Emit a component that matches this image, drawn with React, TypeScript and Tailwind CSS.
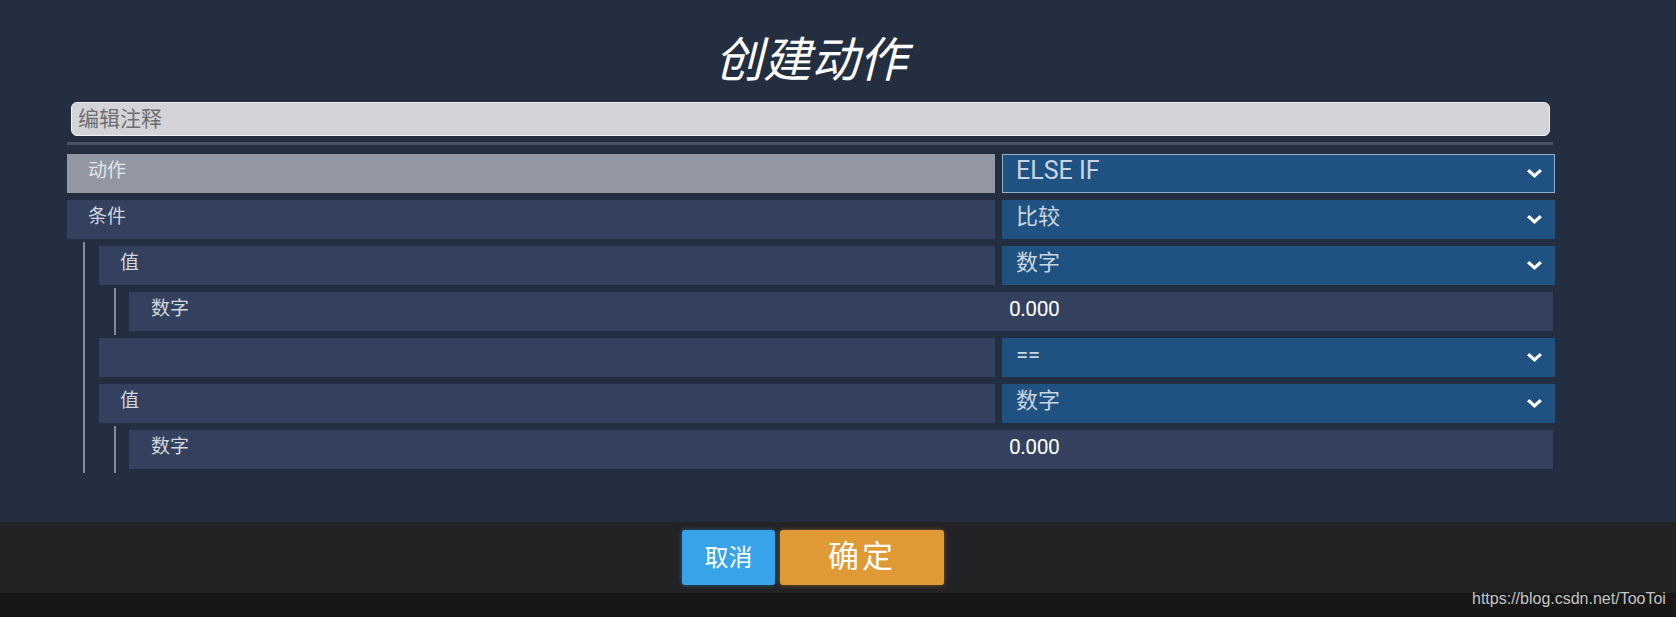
import React from 'react';

const Chevron: React.FC = () => (
  <svg width="15" height="9" viewBox="0 0 15 9" className="shrink-0">
    <path d="M0 2.3 L2.3 0 L7.5 4.7 L12.7 0 L15 2.3 L7.5 9 Z" fill="#ffffff" />
  </svg>
);

interface RowProps {
  label: string;
  value: string;
  active?: boolean;
  latin?: boolean;
}

const SelectRow: React.FC<RowProps> = ({ label, value, active, latin }) => (
  <div className="flex h-[39px] gap-[7px]">
    <div
      className={`flex flex-1 items-center pb-[6px] pl-[21px] text-[19px] leading-[24px] ${
        active ? 'bg-[#9397a1] text-[#e4e6ea]' : 'bg-[#33415f] text-[#d2d6dd]'
      }`}
    >
      {label}
    </div>
    <div
      className={`flex w-[553px] shrink-0 items-center justify-between bg-[#1f5280] ${
        active ? 'border border-[#8fb0cf] pl-[13px] pr-[12px]' : 'pl-[14px] pr-[13px]'
      }`}
    >
      <span className={`pb-[6px] leading-[28px] text-[#cbd6e4] ${latin ? 'text-[25px]' : 'text-[22px]'}`}>
        {value}
      </span>
      <Chevron />
    </div>
  </div>
);

const NumberRow: React.FC<{ label: string; value: string }> = ({ label, value }) => (
  <div className="mr-[2px] flex h-[39px] items-center bg-[#33415f] pb-[6px]">
    <span className="flex-1 pl-[22px] text-[19px] leading-[24px] text-[#d2d6dd]">{label}</span>
    <span className="w-[551px] shrink-0 pl-[7px] text-[21px] leading-[24px] tracking-[-0.5px] text-white">
      {value}
    </span>
  </div>
);

const Branch: React.FC<{ outer?: boolean; children: React.ReactNode }> = ({ outer, children }) => (
  <div className="flex">
    <div
      className={`-my-[4px] w-[2px] shrink-0 bg-[#858a94] ${outer ? 'ml-[16px] mr-[14px]' : 'ml-[15px] mr-[13px]'}`}
    />
    <div className="flex min-w-0 flex-1 flex-col gap-[7px]">{children}</div>
  </div>
);

export default function App() {
  return (
    <div className="relative flex h-[617px] w-full flex-col overflow-hidden font-['Roboto','Noto_Sans_CJK_SC',sans-serif]">
      <main className="h-[522px] shrink-0 bg-[#242e41] pl-[67px] pr-[121px]">
        <h1 className="pt-[37px] text-center text-[48px] font-normal italic leading-none text-white">
          创建动作
        </h1>

        <input
          className="mx-[4px] mt-[17px] block h-[34px] w-[calc(100%-9px)] rounded-[6px] border-[1.5px] border-[#eef0f3] bg-[#d3d4d8] px-[6px] text-[21px] text-[#333] outline-none placeholder:text-[#6d6e72]"
          placeholder="编辑注释"
        />

        <div className="mr-[2px] mt-[6px] h-[3px] bg-[#4b5363]" />

        <div className="mt-[9px] flex flex-col gap-[7px]">
          <SelectRow label="动作" value="ELSE IF" active latin />
          <SelectRow label="条件" value="比较" />
          <Branch outer>
            <SelectRow label="值" value="数字" />
            <Branch>
              <NumberRow label="数字" value="0.000" />
            </Branch>
            <SelectRow label="" value="==" />
            <SelectRow label="值" value="数字" />
            <Branch>
              <NumberRow label="数字" value="0.000" />
            </Branch>
          </Branch>
        </div>
      </main>

      <footer className="flex h-[71px] shrink-0 justify-center gap-[5px] bg-[#232225] pl-[71px] pr-[121px] pt-[8px]">
        <button className="h-[55px] w-[93px] rounded-[3px] bg-[#37a3e8] text-[24px] font-normal text-white shadow-[0_0_5px_rgba(55,163,232,0.45)]">
          取消
        </button>
        <button className="h-[55px] w-[164px] rounded-[3px] bg-[#e09a35] text-[31px] font-normal tracking-[3px] text-white shadow-[0_0_5px_rgba(224,154,53,0.45)]">
          确定
        </button>
      </footer>

      <div className="flex-1 bg-[#171717]" />

      <span className="absolute left-[1472px] top-[591px] font-['Liberation_Sans',sans-serif] text-[16px] leading-[16px] text-[#c4c4c4]">
        https://blog.csdn.net/TooToi
      </span>
    </div>
  );
}
